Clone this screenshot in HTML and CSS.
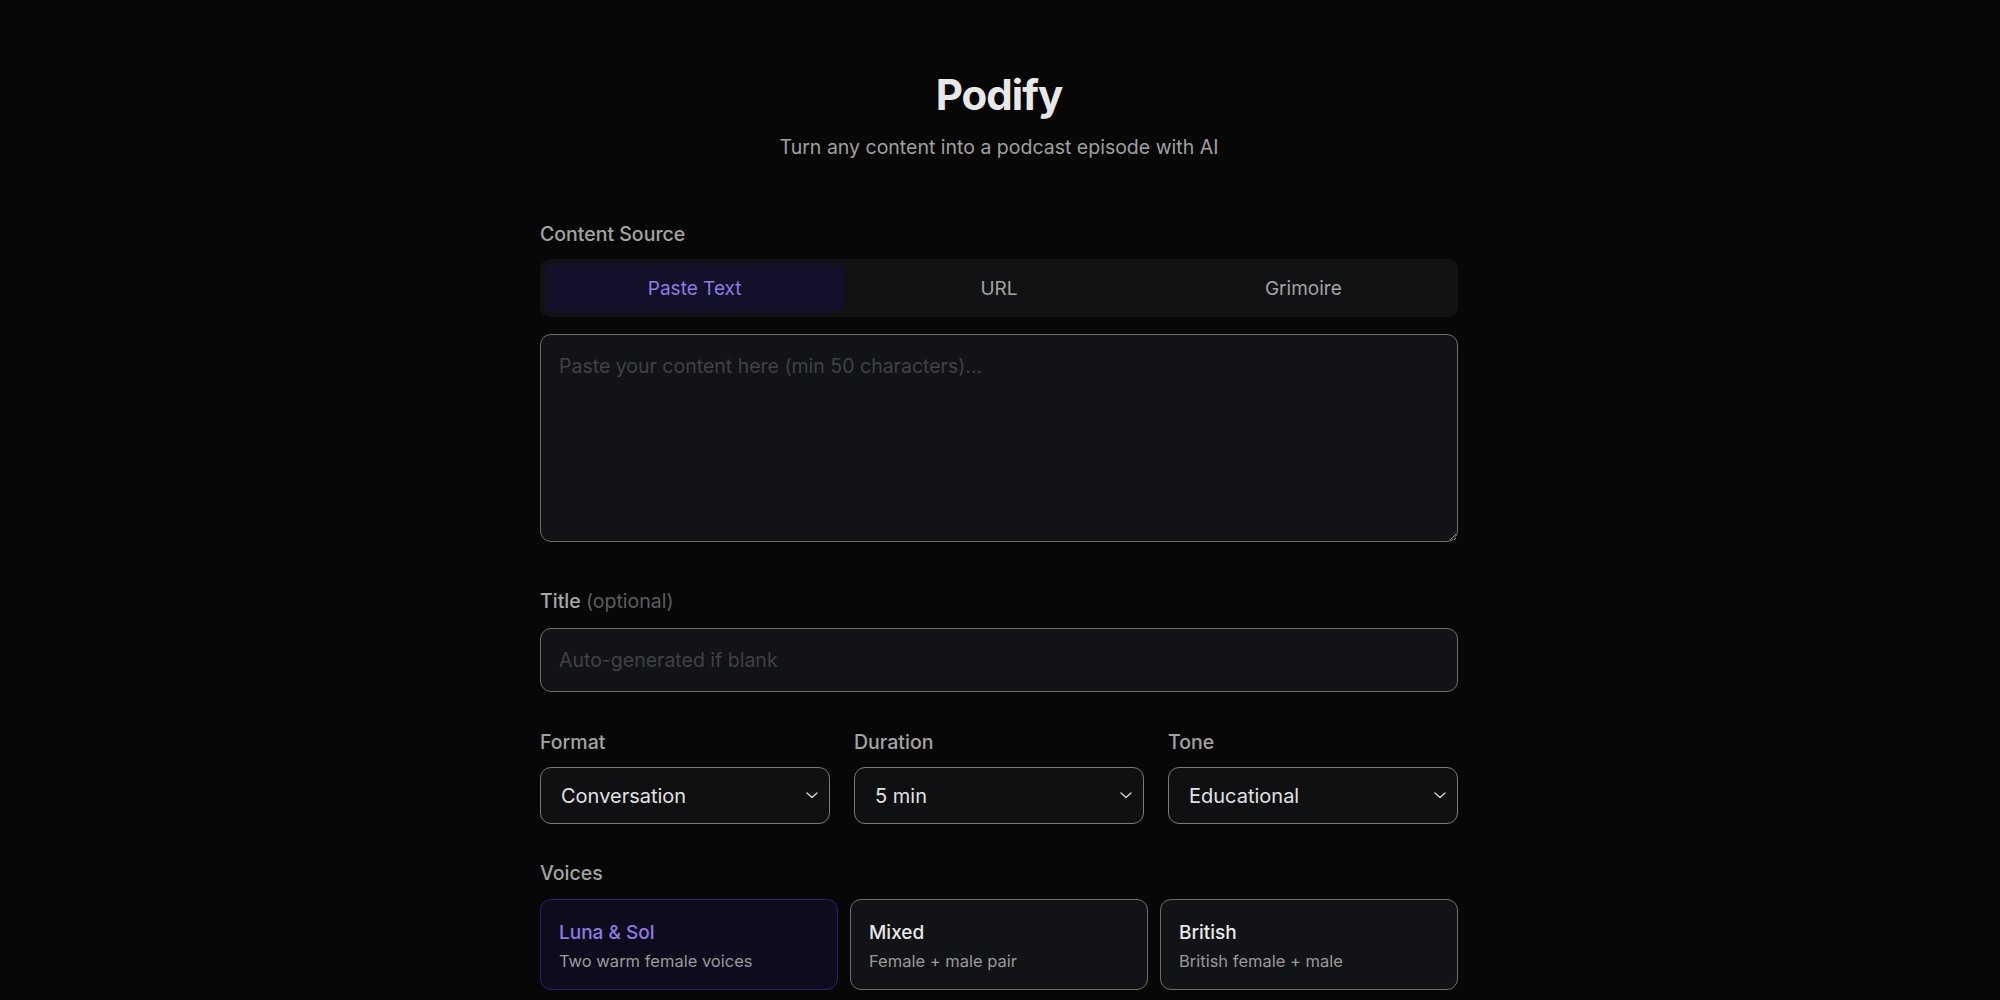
FILE: index.html
```html
<!DOCTYPE html>
<html lang="en">
<head>
<meta charset="utf-8">
<title>Podify</title>
<link rel="stylesheet" href="styles.css">
</head>
<body>
<main class="page">
  <header class="hero">
    <h1 class="brand">Podify</h1>
    <p class="tagline">Turn any content into a podcast episode with AI</p>
  </header>

  <section class="field field-source">
    <div class="label">Content Source</div>
    <div class="tabs">
      <button class="tab tab-active">Paste Text</button>
      <button class="tab">URL</button>
      <button class="tab">Grimoire</button>
    </div>
    <textarea class="textarea" placeholder="Paste your content here (min 50 characters)..."></textarea>
  </section>

  <section class="field field-title">
    <div class="label"><span class="label-strong">Title</span> <span class="label-muted">(optional)</span></div>
    <input class="input" type="text" placeholder="Auto-generated if blank">
  </section>

  <section class="options">
    <div class="option">
      <div class="label">Format</div>
      <div class="select">
        <span class="select-value">Conversation</span>
        <svg class="chevron" width="12" height="7" viewBox="0 0 12 7"><path d="M1 1l5 4.5L11 1" fill="none" stroke="#d4d4d4" stroke-width="1.4" stroke-linecap="round" stroke-linejoin="round"/></svg>
      </div>
    </div>
    <div class="option">
      <div class="label">Duration</div>
      <div class="select">
        <span class="select-value">5 min</span>
        <svg class="chevron" width="12" height="7" viewBox="0 0 12 7"><path d="M1 1l5 4.5L11 1" fill="none" stroke="#d4d4d4" stroke-width="1.4" stroke-linecap="round" stroke-linejoin="round"/></svg>
      </div>
    </div>
    <div class="option">
      <div class="label">Tone</div>
      <div class="select">
        <span class="select-value">Educational</span>
        <svg class="chevron" width="12" height="7" viewBox="0 0 12 7"><path d="M1 1l5 4.5L11 1" fill="none" stroke="#d4d4d4" stroke-width="1.4" stroke-linecap="round" stroke-linejoin="round"/></svg>
      </div>
    </div>
  </section>

  <section class="field field-voices">
    <div class="label">Voices</div>
    <div class="voices">
      <div class="voice voice-active">
        <div class="voice-name">Luna &amp; Sol</div>
        <div class="voice-desc">Two warm female voices</div>
      </div>
      <div class="voice">
        <div class="voice-name">Mixed</div>
        <div class="voice-desc">Female + male pair</div>
      </div>
      <div class="voice">
        <div class="voice-name">British</div>
        <div class="voice-desc">British female + male</div>
      </div>
    </div>
  </section>
</main>
</body>
</html>
```

FILE: styles.css
```css
* { box-sizing: border-box; }

html, body {
  margin: 0;
  padding: 0;
  background: #070707;
  height: 100%;
  overflow: hidden;
}

body {
  font-family: Inter, "Noto Sans", "Liberation Sans", sans-serif;
  color: #e6e6e6;
}

.page {
  width: 918px;
  margin-left: calc(50% - 460px);
  padding-top: 67px;
}

.hero {
  text-align: center;
}

.brand {
  margin: 0;
  font-size: 42px;
  line-height: 56px;
  font-weight: 700;
  letter-spacing: -1px;
  color: #e8e8e8;
}

.tagline {
  margin: 10px 0 0;
  font-size: 19.5px;
  line-height: 28px;
  color: #a0a0a0;
}

.label {
  font-size: 19.5px;
  line-height: 24px;
  font-weight: 500;
  color: #a3a3a3;
  margin-bottom: 13px;
}

.label-strong { color: #a8a8a8; font-weight: 500; }
.label-muted { color: #5e5e5e; font-weight: 400; }

.field-source { margin-top: 61px; }

.tabs {
  display: grid;
  grid-template-columns: repeat(3, 1fr);
  gap: 5px;
  padding: 5px;
  height: 58px;
  background: #101214;
  border-radius: 10px;
}

.tab {
  border: 0;
  border-radius: 8px;
  background: transparent;
  font-family: inherit;
  font-size: 19px;
  color: #a3a3a3;
  padding: 0;
}

.tab-active {
  background: #13112a;
  color: #8d7be6;
}

.textarea {
  display: block;
  width: 100%;
  height: 208px;
  margin-top: 17px;
  padding: 18px 18px;
  background: #111316;
  border: 1.5px solid #6e6e69;
  border-radius: 11px;
  font-family: inherit;
  font-size: 19.5px;
  line-height: 26px;
  color: #e6e6e6;
  outline: none;
}

.textarea::placeholder,
.input::placeholder {
  color: #404246;
}

.field-title { margin-top: 47px; }
.field-title .label { margin-bottom: 15px; }

.input {
  display: block;
  width: 100%;
  height: 64px;
  padding: 0 18px;
  background: #111316;
  border: 1.5px solid #6e6e69;
  border-radius: 11px;
  font-family: inherit;
  font-size: 19.5px;
  color: #e6e6e6;
  outline: none;
}

.options {
  display: grid;
  grid-template-columns: repeat(3, 1fr);
  gap: 24px;
  margin-top: 38px;
}

.select {
  display: flex;
  align-items: center;
  justify-content: space-between;
  height: 57px;
  padding: 0 11px 0 20px;
  background: #0e1012;
  border: 1.5px solid #7a7a76;
  border-radius: 11px;
}

.select-value {
  font-size: 20px;
  color: #e2e2e2;
}

.chevron { display: block; }

.field-voices { margin-top: 37px; }
.field-voices .label { margin-bottom: 14px; }

.voices {
  display: grid;
  grid-template-columns: repeat(3, 1fr);
  gap: 12px;
}

.voice {
  height: 91px;
  padding: 21px 18px 0;
  background: #111316;
  border: 1.5px solid #6e6e69;
  border-radius: 11px;
}

.voice-active {
  background: #0d0b1c;
  border-color: #2a2170;
}

.voice-name {
  font-size: 19px;
  line-height: 24px;
  font-weight: 500;
  color: #e8e8e8;
}

.voice-active .voice-name { color: #8d7be6; }

.voice-desc {
  margin-top: 5px;
  font-size: 16.5px;
  line-height: 22px;
  color: #9a9a9a;
}
```
